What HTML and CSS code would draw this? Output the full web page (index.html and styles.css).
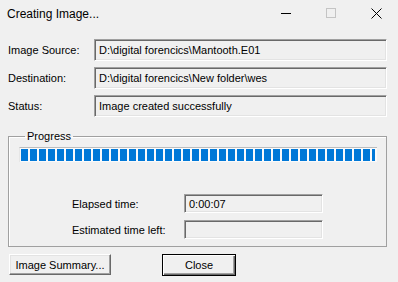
FILE: index.html
```html
<html lang="en">
  <head>
    <meta charset="utf-8">
    <title>Creating Image...</title>
    <link rel="stylesheet" href="styles.css">
  </head>
  <body>
    <div id="window">

      <div class="titlebar">
        <span class="title">Creating Image...</span>
        <span class="ctl ctlMin"><i></i></span>
        <span class="ctl ctlMax"><i></i></span>
        <span class="ctl ctlClose">
          <svg width="11" height="11" viewBox="0 0 11 11"><path d="M0.5 0.5 L10.5 10.5 M10.5 0.5 L0.5 10.5" stroke="#000" stroke-width="1" fill="none"/></svg>
        </span>
      </div>

      <div class="info">
        <label>Image Source:</label>
        <div class="field">D:\digital forencics\Mantooth.E01</div>
        <label>Destination:</label>
        <div class="field">D:\digital forencics\New folder\wes</div>
        <label>Status:</label>
        <div class="field">Image created successfully</div>
      </div>

      <fieldset class="group">
        <legend>Progress</legend>
        <div class="bar"><div class="chunks"></div></div>
        <div class="times">
          <label>Elapsed time:</label>
          <div class="field small">0:00:07</div>
          <label>Estimated time left:</label>
          <div class="field small"></div>
        </div>
      </fieldset>

      <div class="buttons">
        <button class="bSummary" type="button">Image Summary...</button>
        <button class="bClose" type="button">Close</button>
      </div>

    </div>
  </body>
</html>
```

FILE: styles.css
```css
body         {  margin: 0;  background: #f0f0f0;  font-family: "Liberation Sans", Arial, sans-serif;  font-size: 11px;  color: #000;  }
#window      {  width: 398px;  height: 282px;  overflow: hidden;  }

.titlebar    {  display: flex;  align-items: center;  height: 30px;  }
.title       {  flex: 1;  padding-left: 7px;  font-size: 12px;  padding-bottom: 3px;  }
.ctl         {  width: 45px;  height: 30px;  display: flex;  align-items: center;  justify-content: center;  padding-bottom: 4px;  box-sizing: border-box;  }
.ctlMin i    {  display: block;  width: 10px;  height: 1px;  background: #000;  }
.ctlMax i    {  display: block;  width: 8px;  height: 8px;  border: 1px solid #c4c4c4;  }
.ctlClose    {  padding-left: 1px;  }

.info        {  display: grid;  grid-template-columns: 86px 293px;  row-gap: 6px;  padding: 9px 0 0 8px;  align-items: center;  }
.field       {  height: 22px;  box-sizing: border-box;  padding: 3px 0 0 4px;  border-top: 1px solid #a0a0a0;  border-left: 1px solid #a0a0a0;  border-right: 1px solid #fff;  border-bottom: 1px solid #fff;  box-shadow: inset 1px 1px 0 #696969, inset -1px -1px 0 #e3e3e3;  white-space: nowrap;  overflow: hidden;  line-height: 15px;  }
.field.small {  height: 19px;  padding-top: 2px;  }

.group       {  margin: 13px 0 0 8px;  width: 379px;  box-sizing: border-box;  padding: 4px 9px 7px 10px;  border: 1px solid #a0a0a0;  box-shadow: inset 1px 1px 0 #fff;  }
.group legend {  padding: 0 2px;  margin-left: 6px;  font-size: 11px;  line-height: 13px;  }

.bar         {  height: 15px;  box-sizing: border-box;  border-top: 1px solid #bcbcbc;  border-left: 1px solid #e6e6e6;  background: #fafafa;  padding: 1px 2px 1px 1px;  width: 358px;  }
.chunks      {  height: 100%;  background: repeating-linear-gradient(to right, #0078d7 0, #0078d7 7px, transparent 7px, transparent 9px);  }

.times       {  display: grid;  grid-template-columns: 112px 139px;  row-gap: 7px;  margin: 32px 0 0 53px;  align-items: center;  }

.buttons     {  display: flex;  gap: 51px;  padding: 7px 0 0 9px;  }
button       {  font-family: "Liberation Sans", Arial, sans-serif;  font-size: 11px;  color: #000;  height: 21px;  background: #f0f0f0;  padding: 0;  margin: 0;  }
button.bSummary {  width: 102px;  border: 1px solid;  border-color: #fff #696969 #696969 #fff;  box-shadow: inset -1px -1px 0 #a0a0a0, inset 1px 1px 0 #e3e3e3;  }
button.bClose {  width: 74px;  height: 22px;  border: 1px solid #000;  box-shadow: inset 1px 1px 0 #fff, inset -1px -1px 0 #696969, inset -2px -2px 0 #a0a0a0;  }
```
